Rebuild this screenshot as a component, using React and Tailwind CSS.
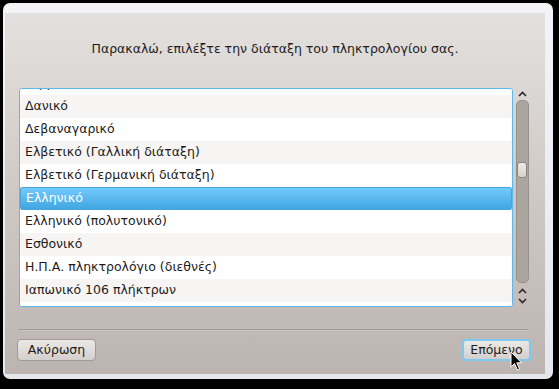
import React from 'react';

const layouts = [
  'Γερμανικό',
  'Δανικό',
  'Δεβαναγαρικό',
  'Ελβετικό (Γαλλική διάταξη)',
  'Ελβετικό (Γερμανική διάταξη)',
  'Ελληνικό',
  'Ελληνικό (πολυτονικό)',
  'Εσθονικό',
  'Η.Π.Α. πληκτρολόγιο (διεθνές)',
  'Ιαπωνικό 106 πλήκτρων',
  '',
];

function Chevron({ up }) {
  return (
    <svg width="9" height="6" viewBox="0 0 9 6" className="block">
      <path
        d={up ? 'M1 5 L4.5 1.5 L8 5' : 'M1 1 L4.5 4.5 L8 1'}
        fill="none"
        stroke="#2b2827"
        strokeWidth="1.6"
      />
    </svg>
  );
}

function Cursor() {
  return (
    <svg width="13" height="21" viewBox="0 0 13 21" className="absolute left-[510px] top-[351px]">
      <path d="M1 1 L1 16 L4.5 12.5 L7.5 19 L9.5 18 L6.8 11.8 L11.5 11.8 Z" fill="#000" stroke="#fff" strokeWidth="1" strokeLinejoin="round" />
    </svg>
  );
}

export default function App() {
  const selected = 'Ελληνικό';
  return (
    <div className="relative w-[559px] h-[389px] bg-black p-[3px] overflow-hidden" style={{ fontFamily: '"DejaVu Sans", sans-serif' }}>
      <div className="w-[550px] h-[376px] rounded-[7px] bg-gradient-to-b from-[#f2f4f7] to-[#e4e8ed] pt-[10px] pl-[2px] pr-[8px] pb-[5px] flex">
        <div className="flex-1 flex flex-col bg-gradient-to-b from-[#e3e1df] via-[#cfc9c5] to-[#bcb4b0] text-[#1e1b1a]">
          <div className="h-[75px] pt-[28px] text-center text-[12.5px] leading-[15px]">
            Παρακαλώ, επιλέξτε την διάταξη του πληκτρολογίου σας.
          </div>

          <div className="flex ml-[14px] h-[219px]">
            <div className="w-[494px] h-full border border-[#5fb6e8] rounded-[3px] bg-white overflow-hidden">
              <div className="-mt-[17px]">
                {layouts.map((name, i) => {
                  const isSel = name === selected;
                  return (
                    <div
                      key={i}
                      className={
                        isSel
                          ? 'h-[23px] pl-[5px] flex items-center text-[12.5px] text-white bg-gradient-to-b from-[#72cafc] to-[#41a6e1] border border-[#4aa5dc] rounded-[2px]'
                          : i % 2 === 1
                          ? 'h-[23px] pl-[5px] flex items-center text-[12.5px] bg-[#f6f5f3]'
                          : 'h-[23px] pl-[5px] flex items-center text-[12.5px] bg-white'
                      }
                    >
                      {name}
                    </div>
                  );
                })}
              </div>
            </div>

            <div className="ml-[2px] w-[14px] h-full flex flex-col items-center">
              <div className="h-[12px] flex items-center justify-center">
                <Chevron up />
              </div>
              <div className="w-[13px] h-[183px] rounded-[5px] bg-[#aca49f] border border-[#98908b] flex flex-col items-center">
                <div className="mt-[61px] w-[10px] h-[16px] rounded-[3px] bg-gradient-to-b from-[#eeebe8] to-[#d6d2ce] border border-[#8b837f]" />
              </div>
              <div className="mt-[5px] flex flex-col items-center gap-[4px]">
                <Chevron up />
                <Chevron />
              </div>
            </div>
          </div>

          <div className="ml-[14px] w-[509px] mt-[22px] h-[1px] bg-[#a39b97]" />
          <div className="ml-[14px] w-[509px] h-[1px] bg-[#cbc5c1]" />

          <div className="mt-[8px] flex justify-between pl-[12px] pr-[14px]">
            <div className="w-[79px] h-[22px] rounded-[4px] border border-[#a29a96] bg-gradient-to-b from-[#ebe9e7] to-[#d3cfcc] flex items-center justify-center text-[12.5px]">
              Ακύρωση
            </div>
            <div className="w-[69px] h-[22px] rounded-[4px] border-2 border-[#7cc9f2] bg-gradient-to-b from-[#ebe9e7] to-[#d3cfcc] flex items-center justify-center text-[12.5px]">
              Επόμενο
            </div>
          </div>
        </div>
      </div>
      <Cursor />
    </div>
  );
}
